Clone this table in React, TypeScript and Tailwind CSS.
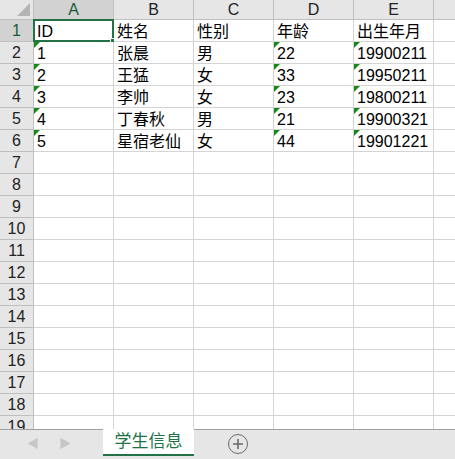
import React from "react";

const cols = ["A", "B", "C", "D", "E"];

const data: string[][] = [
  ["ID", "姓名", "性别", "年龄", "出生年月"],
  ["1", "张晨", "男", "22", "19900211"],
  ["2", "王猛", "女", "33", "19950211"],
  ["3", "李帅", "女", "23", "19800211"],
  ["4", "丁春秋", "男", "21", "19900321"],
  ["5", "星宿老仙", "女", "44", "19901221"],
];

// columns A, D, E hold numbers stored as text -> green marker
const flagged = [0, 3, 4];

const font = { fontFamily: '"Liberation Sans", "Noto Sans CJK SC", sans-serif' };

const Row: React.FC<{ n: number; cells: string[] }> = ({ n, cells }) => {
  const isFirst = n === 1;
  return (
    <div className="flex h-[22px] shrink-0">
      <div
        className={`w-[34px] shrink-0 flex items-center justify-center border-r border-b border-[#bfbfbf] text-[16px] ${
          isFirst ? "bg-[#d2d2d2] text-[#185c37]" : "bg-[#e6e6e6] text-[#222]"
        }`}
      >
        {n}
      </div>
      {cols.map((c, i) => (
        <div
          key={c}
          className="relative w-[80px] shrink-0 border-r border-b border-[#d4d4d4] bg-white pl-[3px] pt-[2px] flex items-center text-[16px] text-black leading-none"
        >
          {n > 1 && cells[i] && flagged.includes(i) && (
            <span className="absolute left-0 top-0 w-0 h-0 border-t-[6px] border-r-[6px] border-t-[#168a16] border-r-transparent" />
          )}
          {cells[i]}
          {isFirst && i === 0 && (
            <span className="absolute -left-px -top-px w-[81px] h-[23px] border-2 border-[#217346] pointer-events-none">
              <span className="absolute -right-[4px] -bottom-[4px] w-[6px] h-[6px] bg-[#217346] border border-white" />
            </span>
          )}
        </div>
      ))}
      <div className="flex-1 border-b border-[#d4d4d4] bg-white" />
    </div>
  );
};

const App: React.FC = () => {
  return (
    <div className="w-[455px] h-[459px] bg-white flex flex-col overflow-hidden" style={font}>
      <div className="h-[429px] flex flex-col overflow-hidden">
        {/* column headers */}
        <div className="flex h-[20px] shrink-0">
          <div className="relative w-[34px] shrink-0 bg-[#e6e6e6] border-r border-b border-[#bfbfbf]">
            <span className="absolute right-[3px] bottom-[3px] w-0 h-0 border-l-[13px] border-b-[13px] border-l-transparent border-b-[#b4b4b4]" />
          </div>
          {cols.map((c, i) => (
            <div
              key={c}
              className={`w-[80px] shrink-0 flex items-center justify-center border-r border-b border-[#bfbfbf] text-[16px] ${
                i === 0 ? "bg-[#d2d2d2] text-[#185c37]" : "bg-[#e6e6e6] text-[#222]"
              }`}
            >
              {c}
            </div>
          ))}
          <div className="flex-1 bg-[#e6e6e6] border-b border-[#bfbfbf]" />
        </div>
        {Array.from({ length: 19 }, (_, k) => (
          <Row key={k} n={k + 1} cells={data[k] ?? []} />
        ))}
      </div>

      {/* sheet tabs */}
      <div className="h-[30px] bg-[#e6e6e6] border-t border-[#9e9e9e] flex items-start">
        <div className="w-[103px] shrink-0 flex items-center h-[27px] gap-[20px] pl-[27px] text-[#c6c6c6] text-[12px]">
          <span>◀</span>
          <span>▶</span>
        </div>
        <div className="w-[91px] h-[27px] -mt-px bg-white border-b-2 border-[#217346] flex items-center justify-center text-[17px] text-[#217346]">
          学生信息
        </div>
        <div className="ml-[34px] mt-[4px] w-[20px] h-[20px] rounded-full border border-[#6b6b6b] flex items-center justify-center">
          <svg width="12" height="12" viewBox="0 0 12 12">
            <path d="M6 1v10M1 6h10" stroke="#6b6b6b" strokeWidth="1.6" />
          </svg>
        </div>
      </div>
    </div>
  );
};

export default App;
